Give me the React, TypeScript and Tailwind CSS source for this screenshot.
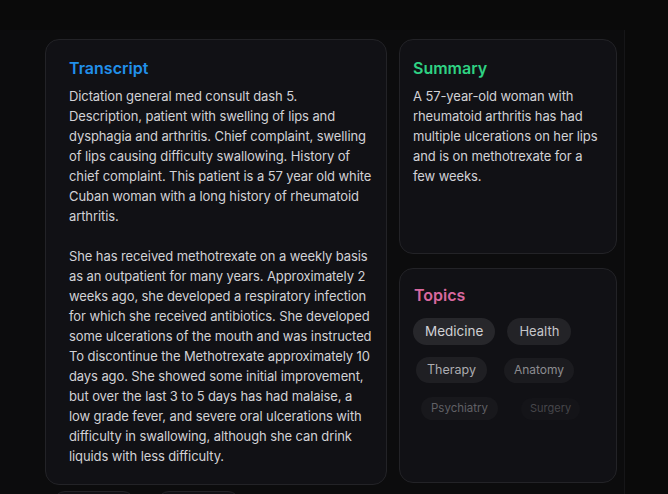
import React from "react";

const transcriptParagraphs = [
  "Dictation general med consult dash 5. Description, patient with swelling of lips and dysphagia and arthritis. Chief complaint, swelling of lips causing difficulty swallowing. History of chief complaint. This patient is a 57 year old white Cuban woman with a long history of rheumatoid arthritis.",
  "She has received methotrexate on a weekly basis as an outpatient for many years. Approximately 2 weeks ago, she developed a respiratory infection for which she received antibiotics. She developed some ulcerations of the mouth and was instructed To discontinue the Methotrexate approximately 10 days ago. She showed some initial improvement, but over the last 3 to 5 days has had malaise, a low grade fever, and severe oral ulcerations with difficulty in swallowing, although she can drink liquids with less difficulty.",
];

const App = () => {
  return (
    <div
      className="w-[668px] h-[494px] overflow-hidden bg-[#0a0a0a] text-[#d4d4d8]"
      style={{ fontFamily: "Inter, 'Noto Sans', sans-serif" }}
    >
      <div className="mt-[30px] w-[625px] h-[464px] bg-[#0c0c0d] border-r border-[#161618] pl-[45px] pt-[9px]">
        <div className="flex gap-3">
          {/* Transcript */}
          <div className="w-[342px] h-[446px] shrink-0 rounded-[14px] border border-[#232327] bg-[#111115] pl-[23px] pr-[14px] pt-4">
            <h2 className="text-[16px] leading-6 font-semibold text-[#2190ea] mb-[6px]">Transcript</h2>
            <div className="text-[13px] leading-5 tracking-[-0.1px] text-[#d2d2d6]">
              <p>{transcriptParagraphs[0]}</p>
              <p className="mt-5">{transcriptParagraphs[1]}</p>
            </div>
          </div>

          <div className="flex flex-col gap-[14px]">
            {/* Summary */}
            <div className="w-[218px] h-[215px] rounded-[14px] border border-[#232327] bg-[#111115] pl-[13px] pr-3 pt-4">
              <h2 className="text-[16px] leading-6 font-semibold text-[#2fd283] mb-[6px]">Summary</h2>
              <p className="text-[13px] leading-5 tracking-[-0.1px] text-[#d2d2d6]">
                A 57-year-old woman with rheumatoid arthritis has had multiple ulcerations on her lips and is on methotrexate for a few weeks.
              </p>
            </div>

            {/* Topics */}
            <div className="w-[218px] h-[215px] rounded-[14px] border border-[#232327] bg-[#111115] pl-[14px] pt-[14px]">
              <h2 className="text-[16px] leading-6 font-semibold text-[#d8689f]">Topics</h2>
              <div className="mt-[11px] flex flex-col">
                <div className="flex items-center gap-[12px] -ml-px">
                  <span className="h-[27px] px-3 rounded-full bg-[#27272b] text-[13.5px] text-[#d0d0d4] flex items-center">Medicine</span>
                  <span className="h-[27px] px-3 rounded-full bg-[#232327] text-[13px] text-[#c6c6ca] flex items-center">Health</span>
                </div>
                <div className="mt-3 flex items-center gap-[17px] ml-[2px]">
                  <span className="h-[26px] px-[11px] rounded-full bg-[#1f1f23] text-[12.5px] text-[#acacb0] flex items-center">Therapy</span>
                  <span className="h-[25px] px-[10px] rounded-full bg-[#1b1b1f] text-[12px] text-[#8c8c90] flex items-center">Anatomy</span>
                </div>
                <div className="mt-[14px] flex items-center gap-[23px] ml-[7px]">
                  <span className="h-[23px] px-[10px] rounded-full bg-[#18181c] text-[11.5px] text-[#606065] flex items-center">Psychiatry</span>
                  <span className="h-[22px] px-[9px] rounded-full bg-[#141418] text-[11px] text-[#46464a] flex items-center">Surgery</span>
                </div>
              </div>
            </div>
          </div>
        </div>

        {/* pills peeking below */}
        <div className="mt-[6px] flex gap-[22px] ml-2">
          <span className="w-[82px] h-6 rounded-full border border-[#232327] bg-[#111115]" />
          <span className="w-[83px] h-6 rounded-full border border-[#232327] bg-[#111115]" />
        </div>
      </div>
    </div>
  );
};

export default App;
